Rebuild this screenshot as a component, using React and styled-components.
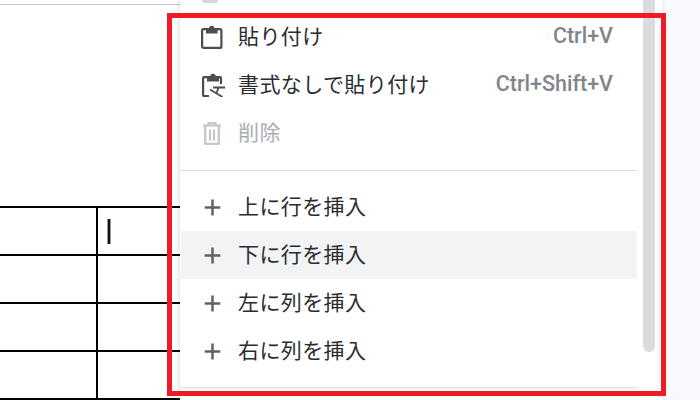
import React from 'react';
import styled, { createGlobalStyle } from 'styled-components';

const Global = createGlobalStyle`
  html, body { margin: 0; padding: 0; background: #fff; }
  body { font-family: "Noto Sans CJK JP", "Liberation Sans", sans-serif; }
`;
const Page = styled.div`
  position: relative; width: 700px; height: 400px; overflow: hidden;
  display: flex; background: #fff;
`;
const Doc = styled.div`
  width: 180px; height: 400px; flex: none; overflow: hidden;
  display: flex; flex-direction: column; position: relative;
`;
const TopRule = styled.div`
  height: 4px; flex: none; border-bottom: 1px solid #c8c9cc; background: #fff;
`;
const TableGrid = styled.div`
  margin-top: 201px; width: 180px; flex: none;
  display: grid; grid-template-columns: 97px 83px; grid-auto-rows: 48px;
  border-top: 2px solid #000;
`;
const TableCell = styled.div`
  box-sizing: border-box; border-bottom: 2px solid #000;
  border-left: ${p => (p.$second ? '2px solid #000' : 'none')};
  margin-left: ${p => (p.$second ? '-1px' : 0)};
  padding: ${p => (p.$second ? '11px 0 0 9px' : 0)};
`;
const Caret = styled.div`
  width: 2px; height: 25px; background: #111; border: solid #999; border-width: 0 1px;
`;
const Menu = styled.div`
  width: 482px; height: 400px; flex: none; background: #fff; overflow: hidden;
  box-shadow: -1px 0 5px rgba(60, 64, 67, .18); position: relative; z-index: 1;
  display: flex;
`;
const MenuList = styled.div`
  width: 456px; margin: -35px 0 0 1px; flex: none;
  display: flex; flex-direction: column;
`;
const ScrollTrack = styled.div`
  width: 12px; height: 352px; margin-left: 6px; flex: none;
  background: #dadce0; border-radius: 0 0 6px 6px;
`;
const Side = styled.div`flex: 1; background: #f8f9fd;`;
const Row = styled.div`
  height: 48px; flex: none; display: flex; align-items: center;
  padding: 0 24px 0 19px;
  background: ${p => (p.$hover ? '#f1f3f4' : 'transparent')};
`;
const IconBox = styled.span`
  width: 26px; height: 24px; flex: none; display: flex;
  align-items: center; justify-content: flex-start;
`;
const Label = styled.span`
  margin-left: 12px; padding-bottom: 5px; flex: 1; font-size: 21px; line-height: 24px;
  letter-spacing: .4px; white-space: nowrap; font-weight: 400;
  color: ${p => (p.$disabled ? '#a9adb1' : '#2a2c30')};
`;
const Shortcut = styled.span`
  font-family: Roboto, "Liberation Sans", sans-serif; font-size: 21.500px; font-weight: 500;
  color: #80868b; white-space: nowrap; line-height: 24px; padding-bottom: 2px;
`;
const Separator = styled.div`
  height: 1px; flex: none; margin: ${p => (p.$last ? '12px' : '13px')} 0 12px; background: #dadce0;
`;
const RedFrame = styled.div`
  position: absolute; left: 167px; top: 13px; width: 489px; height: 373px;
  border: 5px solid #ed1c24; pointer-events: none; z-index: 2;
`;
const PeekIcon = styled.div`
  position: absolute; left: 202px; top: -12px; width: 16px; height: 15px;
  background: #d5d6d8; border-radius: 2px; z-index: 1;
`;

const PasteIcon = () => (
  <svg width="24" height="24" viewBox="0 0 24 24" fill="none">
    <rect x="2.100" y="4.100" width="19.300" height="18.800" rx="1.500" stroke="#4a4d52" strokeWidth="2.200" />
    <circle cx="11.800" cy="3.400" r="2.700" fill="#4a4d52" />
    <path d="M6 4h11.600v4.500H6z" fill="#4a4d52" />
  </svg>
);
const PlainPasteIcon = () => (
  <svg width="26" height="24" viewBox="0 0 26 24" fill="none">
    <path d="M21 11V5.100a1 1 0 0 0-1-1H4.100a1 1 0 0 0-1 1v17a1 1 0 0 0 1 1H9" stroke="#4a4d52" strokeWidth="2.200" />
    <circle cx="13" cy="3.400" r="2.700" fill="#4a4d52" />
    <path d="M7 4h12v4.500H7z" fill="#4a4d52" />
    <path d="M13 14.500h12M10 16.500l12.500 7.500M18.500 15l-2.500 6" stroke="#4a4d52" strokeWidth="1.800" />
  </svg>
);
const TrashIcon = () => (
  <svg width="24" height="24" viewBox="0 0 24 24" fill="none">
    <path d="M3 4.500h18" stroke="#c6c8ca" strokeWidth="2.200" />
    <path d="M8.500 4V2h7v2" stroke="#c6c8ca" strokeWidth="2" />
    <path d="M5.200 5v17a1 1 0 0 0 1 1h11.600a1 1 0 0 0 1-1V5" stroke="#c6c8ca" strokeWidth="2.400" />
    <path d="M10 8.500v11M14 8.500v11" stroke="#c6c8ca" strokeWidth="2.200" />
  </svg>
);
const PlusIcon = () => (
  <svg width="24" height="24" viewBox="0 0 24 24" fill="none">
    <path d="M12.500 4.500v16M4.700 12.500h15.600" stroke="#5f6368" strokeWidth="2.500" />
  </svg>
);

const inserts = [
  { text: '上に行を挿入' },
  { text: '下に行を挿入', hover: true },
  { text: '左に列を挿入' },
  { text: '右に列を挿入' },
];

export default function App() {
  return (
    <Page>
      <Global />
      <Doc>
        <TopRule />
        <TableGrid>
          {[0, 1, 2, 3].map(i => (
            <React.Fragment key={i}>
              <TableCell />
              <TableCell $second>{i === 0 && <Caret />}</TableCell>
            </React.Fragment>
          ))}
        </TableGrid>
      </Doc>
      <Menu>
        <MenuList>
          <Row />
          <Row>
            <IconBox><PasteIcon /></IconBox>
            <Label>貼り付け</Label>
            <Shortcut>Ctrl+V</Shortcut>
          </Row>
          <Row>
            <IconBox><PlainPasteIcon /></IconBox>
            <Label>書式なしで貼り付け</Label>
            <Shortcut>Ctrl+Shift+V</Shortcut>
          </Row>
          <Row>
            <IconBox><TrashIcon /></IconBox>
            <Label $disabled>削除</Label>
          </Row>
          <Separator />
          {inserts.map(r => (
            <Row key={r.text} $hover={r.hover}>
              <IconBox><PlusIcon /></IconBox>
              <Label>{r.text}</Label>
            </Row>
          ))}
          <Separator $last />
        </MenuList>
        <ScrollTrack />
      </Menu>
      <Side />
      <PeekIcon />
      <RedFrame />
    </Page>
  );
}
